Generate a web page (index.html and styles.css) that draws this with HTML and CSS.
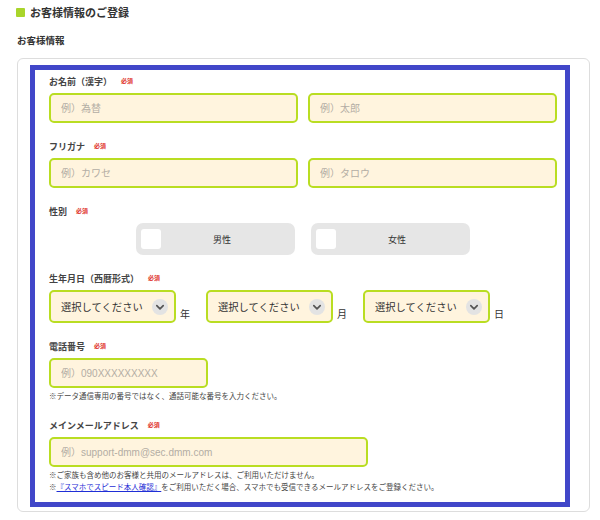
FILE: index.html
```html
<!DOCTYPE html>
<html lang="ja">
<head>
    <meta charset="UTF-8">
    <meta name="viewport" content="width=device-width, initial-scale=1.0">
    <title>お客様情報のご登録</title>
    <link rel="stylesheet" href="styles.css">
</head>
<body>
    <div class="page">
        <h1 class="page-title"><span class="title-mark"></span>お客様情報のご登録</h1>
        <h2 class="section-title">お客様情報</h2>

        <div class="card">
            <div class="highlight">
                <div class="field first">
                    <div class="label">お名前（漢字）<span class="required">必須</span></div>
                    <div class="row-2">
                        <input type="text" class="text-input" placeholder="例）為替">
                        <input type="text" class="text-input" placeholder="例）太郎">
                    </div>
                </div>

                <div class="field">
                    <div class="label">フリガナ<span class="required">必須</span></div>
                    <div class="row-2">
                        <input type="text" class="text-input" placeholder="例）カワセ">
                        <input type="text" class="text-input" placeholder="例）タロウ">
                    </div>
                </div>

                <div class="field">
                    <div class="label">性別<span class="required">必須</span></div>
                    <div class="gender-row">
                        <div class="gender-btn"><span class="check"></span><span class="gender-text">男性</span></div>
                        <div class="gender-btn"><span class="check"></span><span class="gender-text">女性</span></div>
                    </div>
                </div>

                <div class="field">
                    <div class="label">生年月日（西暦形式）<span class="required">必須</span></div>
                    <div class="birth-row">
                        <div class="select">
                            <span>選択してください</span>
                            <svg class="chevron" width="16" height="16" viewBox="0 0 16 16"><circle cx="8" cy="8" r="8" fill="#e3e3e3"/><path d="M4.8 6.6 L8 9.8 L11.2 6.6" fill="none" stroke="#555" stroke-width="1.7" stroke-linecap="round" stroke-linejoin="round"/></svg>
                        </div>
                        <span class="unit">年</span>
                        <div class="select">
                            <span>選択してください</span>
                            <svg class="chevron" width="16" height="16" viewBox="0 0 16 16"><circle cx="8" cy="8" r="8" fill="#e3e3e3"/><path d="M4.8 6.6 L8 9.8 L11.2 6.6" fill="none" stroke="#555" stroke-width="1.7" stroke-linecap="round" stroke-linejoin="round"/></svg>
                        </div>
                        <span class="unit">月</span>
                        <div class="select">
                            <span>選択してください</span>
                            <svg class="chevron" width="16" height="16" viewBox="0 0 16 16"><circle cx="8" cy="8" r="8" fill="#e3e3e3"/><path d="M4.8 6.6 L8 9.8 L11.2 6.6" fill="none" stroke="#555" stroke-width="1.7" stroke-linecap="round" stroke-linejoin="round"/></svg>
                        </div>
                        <span class="unit">日</span>
                    </div>
                </div>

                <div class="field">
                    <div class="label">電話番号<span class="required">必須</span></div>
                    <input type="text" class="text-input phone" placeholder="例）090XXXXXXXXX">
                    <p class="note">※データ通信専用の番号ではなく、通話可能な番号を入力ください。</p>
                </div>

                <div class="field">
                    <div class="label">メインメールアドレス<span class="required">必須</span></div>
                    <input type="text" class="text-input email" placeholder="例）support-dmm@sec.dmm.com">
                    <div class="notes">
                        <p>※ご家族も含め他のお客様と共用のメールアドレスは、ご利用いただけません。</p>
                        <p>※<a href="#">『スマホでスピード本人確認』</a>をご利用いただく場合、スマホでも受信できるメールアドレスをご登録ください。</p>
                    </div>
                </div>
            </div>
        </div>
    </div>
</body>
</html>
```

FILE: styles.css
```css
body {
    margin: 0;
    background-color: #ffffff;
    font-family: 'Liberation Sans', 'Noto Sans CJK JP', sans-serif;
    color: #333;
}

.page {
    padding: 3px 10px 0 16px;
}

.page-title {
    display: flex;
    align-items: center;
    margin: 0;
    height: 18px;
    font-size: 11px;
    font-weight: bold;
    color: #333;
}

.title-mark {
    width: 9px;
    height: 9px;
    margin-right: 5px;
    background-color: #a9d52b;
    border-radius: 1px;
}

.section-title {
    margin: 13px 0 0 1px;
    font-size: 9.5px;
    line-height: 14px;
    font-weight: bold;
    color: #333;
}

.card {
    margin: 10px 0 0 1px;
    padding: 6px 19px 4px 12px;
    border: 1px solid #dddddd;
    border-radius: 6px;
}

.highlight {
    border: 5px solid #4147c9;
    padding: 5px 8px 8px 14px;
}

.field {
    margin-top: 17px;
}

.field.first {
    margin-top: 0;
}

.label {
    display: flex;
    align-items: center;
    height: 12px;
    margin-bottom: 6px;
    font-size: 9px;
    font-weight: bold;
    color: #444;
}

.required {
    margin-left: 9px;
    margin-top: -2px;
    font-size: 6px;
    font-weight: bold;
    color: #e0302a;
}

.row-2 {
    display: flex;
    gap: 10px;
}

.text-input {
    box-sizing: border-box;
    width: 249px;
    height: 30px;
    padding: 0 10px;
    border: 2px solid #b9dd22;
    border-radius: 5px;
    background-color: #fff4de;
    font-family: inherit;
    font-size: 10px;
    color: #333;
    outline: none;
}

.text-input::placeholder {
    color: #b3ada4;
}

.text-input.phone {
    width: 159px;
}

.text-input.email {
    width: 319px;
}

.gender-row {
    display: flex;
    justify-content: center;
    gap: 16px;
}

.gender-btn {
    display: flex;
    align-items: center;
    box-sizing: border-box;
    width: 159px;
    height: 32px;
    padding-left: 5px;
    background-color: #e6e6e6;
    border-radius: 7px;
}

.check {
    width: 20px;
    height: 20px;
    background-color: #ffffff;
    border-radius: 3px;
}

.gender-text {
    flex: 1;
    text-align: center;
    padding-right: 12px;
    font-size: 9px;
    color: #333;
}

.birth-row {
    display: flex;
    align-items: flex-end;
}

.select {
    display: flex;
    align-items: center;
    justify-content: space-between;
    box-sizing: border-box;
    width: 127px;
    height: 33px;
    padding: 0 6px 0 10px;
    border: 2px solid #b9dd22;
    border-radius: 5px;
    background-color: #fff4de;
    font-size: 10.3px;
    color: #333;
}

.unit {
    margin: 0 16px 2px 4px;
    font-size: 10px;
    line-height: 12px;
    color: #333;
}

.unit:last-child {
    margin-right: 0;
}

.note {
    margin: 4px 0 0;
    font-size: 7.5px;
    line-height: 10px;
    color: #444;
}

.notes {
    margin-top: 3px;
}

.notes p {
    margin: 0;
    font-size: 7.5px;
    line-height: 12px;
    color: #444;
}

.notes a {
    color: #1f2ed6;
    text-decoration: underline;
}
```
